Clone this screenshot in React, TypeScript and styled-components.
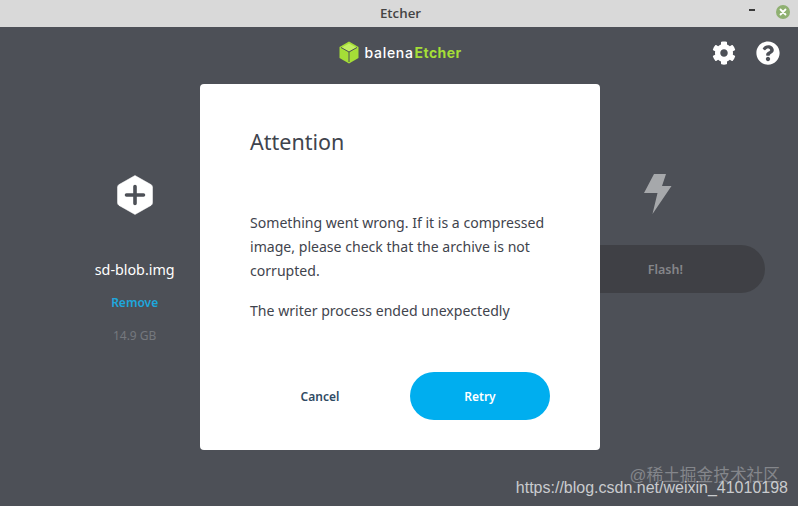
import React from "react";
import styled, { createGlobalStyle } from "styled-components";
import { FaCog, FaQuestionCircle } from "react-icons/fa";

const GlobalStyle = createGlobalStyle`
  html, body {
    margin: 0;
    padding: 0;
    height: 100%;
    overflow: hidden;
    background: #4d5057;
  }
`;

const Window = styled.div`
  position: relative;
  width: 798px;
  height: 506px;
  display: flex;
  flex-direction: column;
  overflow: hidden;
  background: #4d5057;
  font-family: "Noto Sans", "Open Sans", sans-serif;
`;

const TitleBar = styled.div`
  height: 27px;
  box-sizing: border-box;
  padding: 0 0 1px 3px;
  flex: none;
  display: flex;
  align-items: center;
  justify-content: center;
  position: relative;
  background: #d9d9d9;
  color: #444;
  font-size: 13.3px;
  font-weight: 600;
  font-family: "Open Sans", "Noto Sans", sans-serif;
`;

const WindowControls = styled.div`
  position: absolute;
  right: 8px;
  top: 5px;
  display: flex;
  align-items: center;
  gap: 21px;
`;

const MinimizeMark = styled.span`
  width: 6px;
  height: 2px;
  margin-top: -4px;
  background: #3a3a3a;
`;

const CloseButton = styled.span`
  width: 14px;
  height: 14px;
  border-radius: 50%;
  background: #8fb071;
  display: flex;
  align-items: center;
  justify-content: center;
`;

const Header = styled.header`
  height: 52px;
  flex: none;
  display: flex;
  align-items: center;
  justify-content: center;
  position: relative;
`;

const Logo = styled.div`
  display: flex;
  align-items: center;
  gap: 6px;
  margin: -1px 0 0 2px;
  font-family: "Inter", "Noto Sans", sans-serif;
  font-size: 14px;
`;

const LogoWord = styled.span<{ $accent?: boolean }>`
  color: ${(p) => (p.$accent ? "#a5de37" : "#ffffff")};
  font-weight: ${(p) => (p.$accent ? 700 : 500)};
  letter-spacing: ${(p) => (p.$accent ? "0.4px" : "0.7px")};
`;

const LogoText = styled.div`
  display: flex;
  gap: 1px;
`;

const HeaderIcons = styled.div`
  position: absolute;
  right: 18px;
  top: 14px;
  display: flex;
  align-items: center;
  gap: 20px;
  color: #ffffff;
`;

const Steps = styled.main`
  flex: 1;
  display: grid;
  grid-template-columns: repeat(3, 1fr);
  padding: 93px 0 0 2px;
`;

const Step = styled.section`
  display: flex;
  flex-direction: column;
  align-items: center;
`;

const StepIcon = styled.div<{ $shift?: number; $lift?: number }>`
  height: 48px;
  box-sizing: border-box;
  display: flex;
  align-items: center;
  margin-left: ${(p) => p.$shift ?? 0}px;
  padding-bottom: ${(p) => p.$lift ?? 0}px;
`;

const FileName = styled.div`
  margin-top: 40px;
  color: #ffffff;
  font-size: 14.3px;
  line-height: 20px;
`;

const RemoveLink = styled.div`
  margin-top: 14px;
  color: #1ea7dd;
  font-size: 12px;
  font-weight: 600;
  line-height: 18px;
`;

const FileSize = styled.div`
  margin-top: 15px;
  color: #75787e;
  font-size: 12px;
  line-height: 18px;
`;

const FlashButton = styled.div`
  margin-top: 25px;
  width: 200px;
  height: 48px;
  border-radius: 24px;
  background: #3f4045;
  color: #85868a;
  font-size: 12.5px;
  font-weight: 600;
  display: flex;
  align-items: center;
  justify-content: center;
`;

const Modal = styled.div`
  position: absolute;
  left: 200px;
  top: 84px;
  width: 400px;
  height: 366px;
  box-sizing: border-box;
  padding: 41px 50px 30px;
  display: flex;
  flex-direction: column;
  background: #ffffff;
  border-radius: 4px;
  color: #3f444d;
`;

const ModalTitle = styled.h2`
  margin: 0;
  font-size: 21.5px;
  line-height: 34px;
  font-weight: 400;
`;

const ModalBody = styled.div`
  margin-top: 52px;
  flex: 1;
  font-size: 14.08px;
  line-height: 24px;
`;

const Paragraph = styled.p`
  margin: 0 0 16px;
`;

const ModalActions = styled.div`
  display: flex;
  align-items: center;
  justify-content: space-between;
`;

const ActionButton = styled.button<{ $primary?: boolean }>`
  width: 140px;
  height: 48px;
  border: none;
  border-radius: 24px;
  padding: 0;
  font-family: inherit;
  font-size: 12px;
  font-weight: 600;
  background: ${(p) => (p.$primary ? "#00aeef" : "transparent")};
  color: ${(p) => (p.$primary ? "#ffffff" : "#2f4a63")};
`;

const Watermark = styled.div`
  position: absolute;
  right: 10px;
  bottom: 9px;
  color: #c9cbce;
  font-family: "Liberation Sans", sans-serif;
  font-size: 16px;
  line-height: 18px;
  white-space: nowrap;
`;

const WatermarkBack = styled.div`
  position: absolute;
  right: 18px;
  bottom: 20px;
  color: #84868b;
  font-family: "Liberation Sans", "Noto Sans CJK SC", sans-serif;
  font-size: 16.7px;
  line-height: 20px;
  white-space: nowrap;
`;

const CubeLogo = () => (
  <svg width="20" height="23" viewBox="0 0 20 23">
    <path d="M10 0.5 19.5 6 19.5 17 10 22.5 0.5 17 0.5 6Z" fill="#a5de37" />
    <path d="M10 2.5 17.5 6.5 10 10.5 2.5 6.5Z" fill="#c2ee62" />
    <path d="M10 11 10 21M2 6.5 10 11 18 6.5" stroke="#4d5057" strokeWidth="1" fill="none" />
  </svg>
);

const PlusHexagon = () => (
  <svg width="38" height="40" viewBox="0 0 38 40">
    <path
      d="M19 0.5 35 9.6Q36.5 10.5 36.5 12.3V27.7Q36.5 29.5 35 30.4L19 39.5 3 30.4Q1.5 29.5 1.5 27.7V12.3Q1.5 10.5 3 9.6Z"
      fill="#ffffff"
      stroke="#ffffff"
      strokeWidth="0.5"
      strokeLinejoin="round"
    />
    <path d="M19 11.5V28.5M10.5 20H27.5" stroke="#4d5057" strokeWidth="3.6" strokeLinecap="round" />
  </svg>
);

const Bolt = () => (
  <svg width="28" height="40" viewBox="0 0 28 40">
    <path d="M10 0H22L18 12H27.5L8.5 40 13.5 19H0Z" fill="#a6a8ab" />
  </svg>
);

const App = () => {
  return (
    <Window>
      <GlobalStyle />
      <TitleBar>
        Etcher
        <WindowControls>
          <MinimizeMark />
          <CloseButton>
            <svg width="8" height="8" viewBox="0 0 8 8">
              <path d="M1.5 1.5 6.5 6.5M6.5 1.5 1.5 6.5" stroke="#ffffff" strokeWidth="1.8" strokeLinecap="round" />
            </svg>
          </CloseButton>
        </WindowControls>
      </TitleBar>
      <Header>
        <Logo>
          <CubeLogo />
          <LogoText>
            <LogoWord>balena</LogoWord>
            <LogoWord $accent>Etcher</LogoWord>
          </LogoText>
        </Logo>
        <HeaderIcons>
          <FaCog size={24} />
          <FaQuestionCircle size={24} />
        </HeaderIcons>
      </Header>
      <Steps>
        <Step>
          <StepIcon $lift={2}>
            <PlusHexagon />
          </StepIcon>
          <FileName>sd-blob.img</FileName>
          <RemoveLink>Remove</RemoveLink>
          <FileSize>14.9 GB</FileSize>
        </Step>
        <Step />
        <Step>
          <StepIcon $shift={-14} $lift={4}>
            <Bolt />
          </StepIcon>
          <FlashButton>Flash!</FlashButton>
        </Step>
      </Steps>
      <Modal>
        <ModalTitle>Attention</ModalTitle>
        <ModalBody>
          <Paragraph>
            Something went wrong. If it is a compressed image, please check that the archive is not corrupted.
          </Paragraph>
          <Paragraph>The writer process ended unexpectedly</Paragraph>
        </ModalBody>
        <ModalActions>
          <ActionButton>Cancel</ActionButton>
          <ActionButton $primary>Retry</ActionButton>
        </ModalActions>
      </Modal>
      <WatermarkBack>@稀土掘金技术社区</WatermarkBack>
      <Watermark>https://blog.csdn.net/weixin_41010198</Watermark>
    </Window>
  );
};

export default App;
